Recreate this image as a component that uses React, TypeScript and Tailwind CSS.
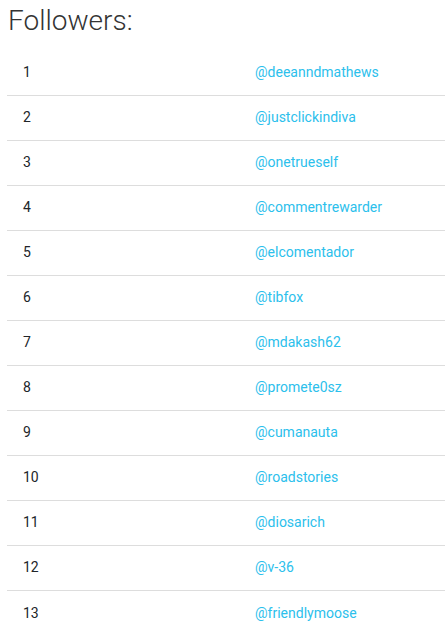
const followers = [
  "deeanndmathews",
  "justclickindiva",
  "onetrueself",
  "commentrewarder",
  "elcomentador",
  "tibfox",
  "mdakash62",
  "promete0sz",
  "cumanauta",
  "roadstories",
  "diosarich",
  "v-36",
  "friendlymoose",
];

export default function App() {
  return (
    <div className="w-full h-screen overflow-hidden bg-white font-['Roboto',sans-serif]">
      <h1 className="ml-2 mt-1 mb-[13px] text-[28px] leading-[34px] font-light text-[#333]">Followers:</h1>
      <div className="ml-[7px] w-[464px]">
        {followers.map((name, i) => (
          <div
            key={name}
            className="flex h-[45px] items-center pb-[2px] border-b border-[#dddddd] last:border-b-0 text-sm leading-5"
          >
            <div className="w-[232px] pl-4 text-[#212529]">{i + 1}</div>
            <div className="pl-4 text-[#2cc0ec]">@{name}</div>
          </div>
        ))}
      </div>
    </div>
  );
}
